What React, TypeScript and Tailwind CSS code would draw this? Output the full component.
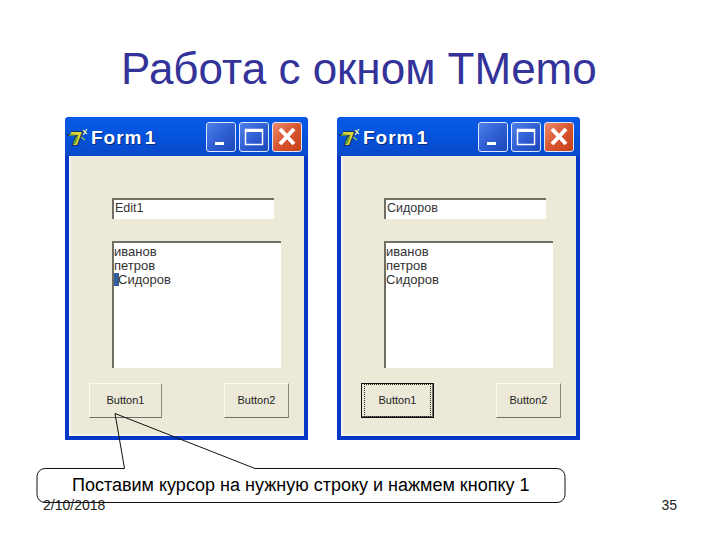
function AppIcon() {
  return (
    <svg width="24" height="22" viewBox="0 0 24 22" className="shrink-0 -ml-[2px]">
      <path d="M0 8h4V5h13l-6 15H4l4-10H0z" fill="#17306e" />
      <path d="M4 6h11l-5 13H6l5-10H4z" fill="#d9d23c" />
      <path d="M7 18l3-7" stroke="#5f9f35" strokeWidth="2.5" />
      <path d="M2 9h6" stroke="#6fae35" strokeWidth="1.5" />
      <path d="M16 4l4 4M20 3l-4 6" stroke="#e6efb0" strokeWidth="1.3" />
      <path d="M14 11l4 3" stroke="#8fc04a" strokeWidth="1.5" />
    </svg>
  )
}

function CaptionButton({ kind }: { kind: 'min' | 'max' | 'close' }) {
  const bg =
    kind === 'close'
      ? 'bg-gradient-to-br from-[#e98a6c] via-[#d9552f] to-[#c2401c]'
      : 'bg-gradient-to-br from-[#4f7fe6] via-[#2f5fd4] to-[#1c46b8]'
  return (
    <div className={`w-[30px] h-[30px] rounded-[3px] border border-[#dfe7fa] flex items-center justify-center ${bg}`}>
      {kind === 'min' && (
        <svg width="28" height="28" viewBox="0 0 28 28">
          <rect x="8" y="19" width="9" height="3" fill="#fff" />
        </svg>
      )}
      {kind === 'max' && (
        <svg width="28" height="28" viewBox="0 0 28 28">
          <rect x="5.5" y="6.5" width="17" height="15" fill="none" stroke="#fff" strokeWidth="1.5" />
          <rect x="5" y="6" width="18" height="3" fill="#fff" />
        </svg>
      )}
      {kind === 'close' && (
        <svg width="28" height="28" viewBox="0 0 28 28">
          <path d="M7 6l14 15M21 6L7 21" stroke="#fff" strokeWidth="4" />
        </svg>
      )}
    </div>
  )
}

function Button({ label, width, focused }: { label: string; width: string; focused?: boolean }) {
  return (
    <div
      className={`${width} h-[35px] flex items-center justify-center text-[11px] text-[#222] bg-[#ece9d8] border ${
        focused
          ? 'border-[#111] shadow-[inset_-1px_-1px_0_#716f64]'
          : 'border-t-[#fbfaf5] border-l-[#fbfaf5] border-r-[#8a8775] border-b-[#716f64]'
      }`}
    >
      <div
        className={`flex items-center justify-center w-full h-full m-[2px] ${
          focused ? 'border border-dotted border-[#222]' : ''
        }`}
      >
        {label}
      </div>
    </div>
  )
}

function FormWindow({ editText, caret, focused }: { editText: string; caret?: boolean; focused?: boolean }) {
  return (
    <div className="w-[243px] h-[323px] flex flex-col bg-[#0838c8] rounded-t-[4px] px-[4px] pb-[4px]">
      <div className="h-[39px] -mx-[4px] px-[4px] flex items-center rounded-t-[4px] bg-gradient-to-b from-[#0a5ae6] via-[#0553dc] to-[#0a48c8]">
        <AppIcon />
        <span className="pt-[3px] text-[19px] font-bold tracking-[1px] [word-spacing:-4px] text-white [text-shadow:1px_1px_0_#0a2a80]">
          Form 1
        </span>
        <div className="ml-auto mr-[2px] flex gap-[3px]">
          <CaptionButton kind="min" />
          <CaptionButton kind="max" />
          <CaptionButton kind="close" />
        </div>
      </div>
      <div className="flex-1 flex flex-col bg-[#ece9d8] border-l-2 border-b-2 border-[#f6f5ec]">
        <div className="ml-[41px] mt-[42px] w-[162px] h-[21px] flex items-center pl-[1px] pb-[2px] text-[12.5px] text-[#333] bg-white border-t-2 border-l-2 border-[#716f64]">
          {editText}
        </div>
        <div className="ml-[41px] mt-[22px] w-[169px] h-[127px] bg-white border-t-2 border-l-2 border-[#716f64] pt-[2px] text-[13px] leading-[14px] text-[#333]">
          <div>иванов</div>
          <div>петров</div>
          <div className="flex">
            {caret && <span className="w-[5px] h-[13px] -mr-[1px] bg-[#2f5f9f]" />}
            <span>Сидоров</span>
          </div>
        </div>
        <div className="ml-[18px] mt-[15px] flex items-start">
          <Button label="Button1" width="w-[73px]" focused={focused} />
          <div className="w-[62px]" />
          <Button label="Button2" width="w-[65px]" />
        </div>
      </div>
    </div>
  )
}

export default function App() {
  return (
    <div className="relative w-[720px] h-[540px] bg-white overflow-hidden flex flex-col font-['Liberation_Sans',Arial,sans-serif]">
      <h1 className="h-[117px] pt-[45px] pl-[121px] text-[44px] leading-[48px] text-[#333399] whitespace-nowrap">
        Работа с окном TMemo
      </h1>

      <div className="flex pl-[65px] gap-[29px]">
        <FormWindow editText="Edit1" caret />
        <FormWindow editText="Сидоров" focused />
      </div>

      <p className="mt-[35px] pl-[72px] text-[18px] leading-[20px] text-black whitespace-nowrap">
        Поставим курсор на нужную строку и нажмем кнопку 1
      </p>

      <div className="mt-[2px] pl-[43px] pr-[43px] flex justify-between text-[14px] leading-[16px] text-[#222]">
        <span>2/10/2018</span>
        <span>35</span>
      </div>

      {/* callout outline with pointer to Button1 */}
      <svg className="absolute inset-0 pointer-events-none" width="720" height="540" viewBox="0 0 720 540">
        <path
          d="M124.5 468.5H45a8 8 0 0 0-8 8v18a8 8 0 0 0 8 8h512a8 8 0 0 0 8-8v-18a8 8 0 0 0-8-8H255L115 413.5z"
          fill="none"
          stroke="#111"
          strokeWidth="1"
        />
      </svg>
    </div>
  )
}
